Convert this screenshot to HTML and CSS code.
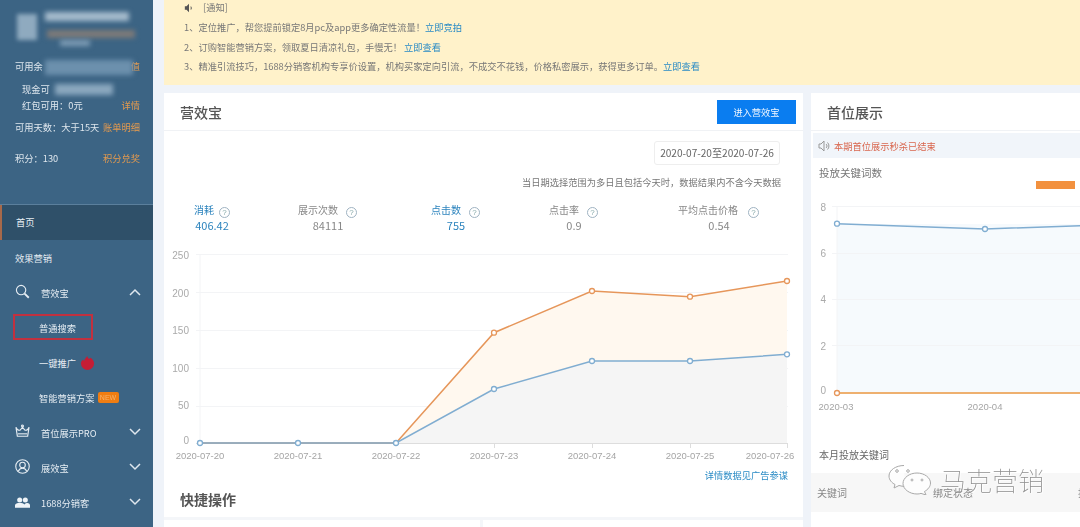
FILE: index.html
```html
<!DOCTYPE html>
<html lang="zh">
<head>
<meta charset="utf-8">
<title>营效宝</title>
<link rel="stylesheet" href="styles.css">
</head>
<body>
<div class="page">
  <aside class="side">
    <div class="account">
      <div class="user"><span class="avatar"></span><span class="smear s1"></span><span class="smear s2"></span><span class="smear s3"></span></div>
      <div class="line l-balance"><span>可用余</span><span class="smear s4"></span><a>值</a></div>
      <div class="line sub l-cash"><span>现金可</span><span class="smear s5"></span></div>
      <div class="line sub l-red"><span>红包可用：0元</span><a>详情</a></div>
      <div class="line l-days"><span>可用天数：大于15天</span><a>账单明细</a></div>
      <div class="line l-score"><span>积分：130</span><a>积分兑奖</a></div>
    </div>
    <nav class="nav">
      <div class="item home">首页</div>
      <div class="item">效果营销</div>
      <div class="item group">
        <svg class="ico" viewBox="0 0 16 16"><circle cx="6.500" cy="6.500" r="5"/><path d="M10.200 10.200l4.500 4.500" stroke-width="2"/></svg>
        <span>营效宝</span>
        <svg class="chev" viewBox="0 0 12 8"><path d="M1 7l5-5 5 5"/></svg>
      </div>
      <div class="item child"><span class="mark">普通搜索</span></div>
      <div class="item child"><span>一键推广</span>
        <svg class="flame" viewBox="0 0 16 15"><path d="M8 0c0 2 1 2.500 2 3 1-.5 1.500-1 1.500-1 2 1.500 3.500 3.500 3.500 6a7 7 0 0 1-14 0c0-2 1-3 2-4 .5.800 1 1 1.500 1C5 3 6.500 1.500 8 0z"/></svg>
      </div>
      <div class="item child"><span>智能营销方案</span><span class="new">NEW</span></div>
      <div class="item group">
        <svg class="ico" viewBox="0 0 16 16"><path d="M1 3.500c1 2.500 3 3.500 4.500 3L8 3.500l2.500 3c1.500.5 3.500-.5 4.500-3l-1.500 9.500h-11z"/><path d="M3 10.500h10"/><circle cx="8" cy="2" r="1"/></svg>
        <span>首位展示PRO</span>
        <svg class="chev" viewBox="0 0 12 8"><path d="M1 1l5 5 5-5"/></svg>
      </div>
      <div class="item group">
        <svg class="ico" viewBox="0 0 16 16"><circle cx="8" cy="8" r="7.200"/><circle cx="8" cy="6.500" r="3"/><path d="M3.500 13c.8-2.200 2.500-3.200 4.500-3.200s3.700 1 4.500 3.200"/></svg>
        <span>展效宝</span>
        <svg class="chev" viewBox="0 0 12 8"><path d="M1 1l5 5 5-5"/></svg>
      </div>
      <div class="item group">
        <svg class="ico solid" viewBox="0 0 16 11"><circle cx="5" cy="2.800" r="2.700"/><circle cx="11" cy="2.800" r="2.700"/><path d="M0 11V8.500C0 6.500 2.500 6 5 6s4 .5 5 1.500c1-1 2-1.500 3-1.500 2 0 3 1 3 2.500V11z"/></svg>
        <span>1688分销客</span>
        <svg class="chev" viewBox="0 0 12 8"><path d="M1 1l5 5 5-5"/></svg>
      </div>
    </nav>
  </aside>

  <main class="main">
    <section class="notice">
      <div class="n-head">
        <svg class="n-ico" viewBox="0 0 12 12"><path d="M1 4h2l3-3v10L3 8H1z"/><path d="M8 3.500a3 3 0 0 1 0 5z"/></svg>
        <span>[通知]</span>
      </div>
      <p>1、定位推广，帮您提前锁定8月pc及app更多确定性流量！<a>立即竞拍</a></p>
      <p>2、订购智能营销方案，领取夏日清凉礼包，手慢无！ <a>立即查看</a></p>
      <p>3、精准引流技巧，1688分销客机构专享价设置，机构买家定向引流，不成交不花钱，价格私密展示，获得更多订单。<a>立即查看</a></p>
    </section>

    <div class="cards">
      <section class="card c-left">
        <header class="c-head">
          <h2>营效宝</h2>
          <button class="enter">进入营效宝</button>
        </header>
        <div class="range-row"><div class="range">2020-07-20至2020-07-26</div></div>
        <div class="range-note">当日期选择范围为多日且包括今天时，数据结果内不含今天数据</div>
        <div class="metrics">
          <div class="metric on m1"><div class="m-l">消耗<i class="q">?</i></div><div class="m-v">406.42</div></div>
          <div class="metric m2"><div class="m-l">展示次数<i class="q">?</i></div><div class="m-v">84111</div></div>
          <div class="metric on m3"><div class="m-l">点击数<i class="q">?</i></div><div class="m-v">755</div></div>
          <div class="metric m4"><div class="m-l">点击率<i class="q">?</i></div><div class="m-v">0.9</div></div>
          <div class="metric m5"><div class="m-l">平均点击价格<i class="q">?</i></div><div class="m-v">0.54</div></div>
        </div>
        <svg class="chart-a" viewBox="164 240 639 228" width="639" height="228">
          <g class="grid">
            <path d="M196 254.500H788M196 292.500H788M196 330.500H788M196 368.500H788M196 406.500H788"/>
            <path d="M200 254V443"/>
          </g>
          <path class="axis" d="M196 443.500H788M494.500 443v5M592.500 443v5M690.500 443v5M787.500 443v5"/>
          <path class="fill-o" d="M396 443L494 332.700 592 291 690 296.700 787 281V443z"/>
          <path class="fill-b" d="M396 443L494 389 592 361 690 361 787 354.300V443z"/>
          <path class="ln-o" d="M200 443H396L494 332.700 592 291 690 296.700 787 281"/>
          <g class="dot-o"><circle cx="494" cy="332.700" r="2.500"/><circle cx="592" cy="291" r="2.500"/><circle cx="690" cy="296.700" r="2.500"/><circle cx="787" cy="281" r="2.500"/></g>
          <path class="ln-b" d="M200 443H396L494 389 592 361 690 361 787 354.300"/>
          <g class="dot-b"><circle cx="200" cy="443" r="2.500"/><circle cx="298" cy="443" r="2.500"/><circle cx="396" cy="443" r="2.500"/><circle cx="494" cy="389" r="2.500"/><circle cx="592" cy="361" r="2.500"/><circle cx="690" cy="361" r="2.500"/><circle cx="787" cy="354.300" r="2.500"/></g>
          <g class="yl">
            <text x="189" y="259">250</text><text x="189" y="297">200</text><text x="189" y="334">150</text><text x="189" y="372">100</text><text x="189" y="409">50</text><text x="189" y="444">0</text>
          </g>
          <g class="xl">
            <text x="200" y="459">2020-07-20</text><text x="298" y="459">2020-07-21</text><text x="396" y="459">2020-07-22</text><text x="494" y="459">2020-07-23</text><text x="592" y="459">2020-07-24</text><text x="690" y="459">2020-07-25</text><text x="770" y="459">2020-07-26</text>
          </g>
        </svg>
        <a class="more">详情数据见广告参谋</a>
        <h2 class="quick">快捷操作</h2>
        <div class="quick-row"><div></div><div></div></div>
      </section>

      <section class="card c-right">
        <header class="c-head"><h2>首位展示</h2></header>
        <div class="flash">
          <svg class="fl-ico" viewBox="0 0 12 12"><path d="M1 4h2l3-3v10L3 8H1z"/><path d="M8 4a2.500 2.500 0 0 1 0 4M9.500 2.500a5 5 0 0 1 0 7"/></svg>
          <span>本期首位展示秒杀已结束</span>
        </div>
        <div class="r-title">投放关键词数</div>
        <svg class="chart-b" viewBox="811 176 269 238" width="269" height="238">
          <rect class="area" x="837" y="225" width="243" height="169"/>
          <path class="legend" d="M1036 182h39v8h-39z"/>
          <g class="grid"><path d="M832 207.500H1080M832 254.500H1080M832 300.500H1080M832 346.500H1080"/><path d="M837 207V394"/></g>
          <path class="ln-b" d="M837 224.700L985 230 1080 226.700"/>
          <circle class="dot-b1" cx="837" cy="224.700" r="2.500"/><circle class="dot-b1" cx="985" cy="230" r="2.500"/>
          <path class="ln-o2" d="M837 394H1080"/>
          <circle class="dot-o1" cx="837" cy="394" r="2.500"/>
          <g class="yl"><text x="826" y="212">8</text><text x="826" y="258">6</text><text x="826" y="304">4</text><text x="826" y="351">2</text><text x="826" y="395">0</text></g>
          <g class="xl"><text x="836" y="411">2020-03</text><text x="985" y="411">2020-04</text></g>
        </svg>
        <div class="r-sub">本月投放关键词</div>
        <div class="r-thead"><span class="t1">关键词</span><span class="t2">绑定状态</span><span class="t3">投放</span></div>
      </section>
    </div>
  </main>
</div>

<div class="wm">
  <svg class="wm-ico" viewBox="0 0 44 30"><path class="b1" d="M16 0.500C8 .5 1 5 1 11c0 4 3 7 6 8.500l-1 3.500 5-2.500c2 .7 4 .9 6 .7"/><path class="b2" d="M29 8c-7.500 0-14 4.800-14 10.500S21.500 29 29 29c1.500 0 3-.2 4-.6l5 1.600-1.500-3.500c3.500-2 6-5 6-8.500C42.500 12.800 36.500 8 29 8z"/><circle cx="9" cy="6" r="1.300"/><circle cx="20" cy="6" r="1.300"/><circle cx="24" cy="15" r="1"/><circle cx="34" cy="15" r="1"/></svg>
  <span class="wm-t">马克营销</span>
</div>
</body>
</html>
```

FILE: styles.css
```css
*, *::before { box-sizing: border-box; }
html, body { margin: 0; padding: 0; width: 1080px; height: 527px; overflow: hidden; }
body { font-family: "Noto Sans CJK SC", "Liberation Sans", sans-serif; font-size: 9.250px; color: #666; background: #eff3f9; }
.page { display: flex; width: 1080px; height: 527px; overflow: hidden; filter: blur(.45px); }
h2, p { margin: 0; }

/* sidebar */
.side { flex: 0 0 153px; background: #3c6484; color: #dfe7ee; }
.account { height: 205px; position: relative; border-bottom: 1px solid #5b7f9c; padding: 0 13px 0 15px; }
.user { height: 58px; position: relative; }
.avatar { position: absolute; left: 2px; top: 14px; width: 20px; height: 26px; background: #8faabf; filter: blur(2px); }
.smear { position: absolute; display: block; filter: blur(2.500px); }
.s1 { left: 30px; top: 12px; width: 84px; height: 9px; background: #a6bccd; }
.s2 { left: 32px; top: 30px; width: 88px; height: 8px; background: #7d7a78; }
.s3 { left: 45px; top: 40px; width: 30px; height: 6px; background: #7f9db5; }
.s4 { left: 30px; top: 1px; width: 88px; height: 15px; background: #6c90ad; }
.s5 { left: 40px; top: 2px; width: 58px; height: 11px; background: #8aa7be; }
.line { display: flex; justify-content: space-between; line-height: 14px; position: relative; white-space: nowrap; }
.line a { color: #e39a4f; }
.sub { padding-left: 7px; }
.l-balance { margin-top: 1px; }
.l-cash { margin-top: 9px; }
.l-red { margin-top: 2px; }
.l-days { margin-top: 8px; }
.l-score { margin-top: 17px; }
.nav { display: flex; flex-direction: column; }
.item { height: 35px; display: flex; align-items: center; padding-left: 15px; color: #e6edf3; }
.home { background: #2f5069; border-left: 2px solid #a8694a; padding: 0 0 1px 14px; }
.group { position: relative; padding-left: 41px; }
.child { padding-left: 39px; }
.ico { position: absolute; left: 15px; top: 9px; width: 15px; height: 15px; fill: none; stroke: #e6edf3; stroke-width: 1.200; }
.ico.solid { fill: #eef3f7; stroke: none; height: 11px; top: 12px; }
.chev { position: absolute; left: 129px; top: 13px; width: 12px; height: 8px; fill: none; stroke: #dfe7ee; stroke-width: 1.500; }
.mark { position: relative; }
.mark::before { content: ""; position: absolute; left: -26px; top: -7px; width: 80px; height: 26px; border: 2px solid #c1313f; }
.flame { width: 15px; height: 14px; margin-left: 4px; fill: #c41d35; }
.new { margin-left: 3px; width: 21px; height: 11px; background: #ef7d12; color: #f6b26b; border-radius: 2px; font-size: 7px; line-height: 11px; text-align: center; font-family: "Liberation Sans", sans-serif; }

/* main */
.main { flex: 1; min-width: 0; padding-left: 11px; overflow: hidden; }
.notice { height: 85px; background: #fff2ca; padding-left: 20px; line-height: 19.500px; color: #777; }
.n-head { display: flex; align-items: center; height: 15px; line-height: 15px; margin-bottom: 3px; }
.n-ico { width: 10px; height: 10px; fill: #555; margin-right: 9px; }
.notice a { color: #2a8bc5; }
.cards { display: flex; gap: 8px; margin-top: 8px; }
.card { background: #fff; height: 434px; }
.c-left { flex: 0 0 639px; }
.c-right { flex: 0 0 290px; overflow: hidden; }
.c-head { height: 38px; display: flex; align-items: center; justify-content: space-between; padding: 0 7px 0 16px; border-bottom: 1px solid #f0f2f5; }
.c-head h2, .quick { font-size: 14px; font-weight: 500; color: #555; }
.enter { width: 79px; height: 24px; margin-top: 1px; border: 0; padding: 0; background: #0a7df0; color: #f2f8ff; font: 9.250px "Noto Sans CJK SC", sans-serif; }
.range-row { display: flex; justify-content: flex-end; padding: 10px 23px 0 0; }
.range { width: 126px; height: 24px; border: 1px solid #eeeeee; border-radius: 3px; text-align: center; line-height: 22px; font-size: 10.100px; color: #666; }
.range-note { text-align: right; padding-right: 22px; margin-top: 10px; line-height: 15px; color: #777; }
.metrics { height: 38px; margin-top: 12px; display: flex; padding-left: 30px; color: #888; }
.metric { text-align: center; flex: none; }
.m-l { font-size: 10px; line-height: 15px; white-space: nowrap; text-align: left; }
.m-v { font-size: 11px; line-height: 15px; }
.on { color: #2b83bd; }
.m1 { width: 36px; margin-right: 68px; }
.m2 { width: 60px; margin-right: 73px; }
.m3 { width: 50px; margin-right: 68px; }
.m4 { width: 50px; margin-right: 79px; }
.m5 { width: 82px; }
.q { display: inline-block; width: 11px; height: 11px; margin-left: 8px; border: 1px solid #9fb3c2; border-radius: 50%; font: 8px/9px "Liberation Sans", sans-serif; text-align: center; color: #8aa; vertical-align: -1px; }
.m1 .q { margin-left: 5px; }
.m5 .q { margin-left: 10px; }
.chart-a, .chart-b { display: block; }
.grid path { stroke: #f3f4f6; fill: none; }
.axis { stroke: #dddddd; fill: none; }
.fill-o { fill: #fff8ef; }
.fill-b { fill: #f5f5f5; }
.ln-o { stroke: #e6965a; stroke-width: 1.500; fill: none; }
.ln-b { stroke: #80add1; stroke-width: 1.500; fill: none; }
.dot-o circle, .dot-o1 { fill: #fff; stroke: #e6965a; stroke-width: 1.300; }
.dot-b circle, .dot-b1 { fill: #fff; stroke: #80add1; stroke-width: 1.300; }
.ln-o2 { stroke: #eeb06f; stroke-width: 1.800; fill: none; }
.yl text { font-size: 10px; fill: #aaa; text-anchor: end; font-family: "Liberation Sans", sans-serif; }
.xl text { font-size: 9.500px; fill: #a5a5a5; text-anchor: middle; font-family: "Liberation Sans", sans-serif; }
.more { display: block; text-align: right; padding-right: 15px; line-height: 14px; color: #2a8bc5; }
.quick { padding-left: 16px; margin-top: 6px; line-height: 22px; font-weight: 700; }
.quick-row { display: flex; gap: 3px; margin-top: 7px; border-top: 3px solid #f4f6f9; height: 12px; }
.quick-row div { flex: 1; }
.quick-row div:first-child { flex: 0 0 319px; border-right: 3px solid #f4f6f9; }
.area { fill: #f6fafd; }
.legend { fill: #f2913f; }
.flash { margin: 2px 0 0 2px; height: 25px; background: #f1f5fa; display: flex; align-items: center; padding-left: 5px; color: #d9674f; }
.fl-ico { width: 12px; height: 12px; fill: none; stroke: #999; margin-right: 4px; }
.r-title { padding-left: 8px; line-height: 16px; margin-top: 7px; font-size: 10.500px; color: #777; }
.chart-b { margin-top: -6px; }
.r-sub { padding-left: 8px; margin-top: 34px; line-height: 16px; color: #666; font-size: 10px; }
.r-thead { height: 39px; margin-top: 10px; background: #f7f7f7; display: flex; align-items: center; color: #888; font-size: 10px; padding-left: 6px; white-space: nowrap; }
.t1 { flex: 0 0 116px; }
.t2 { flex: 0 0 145px; }
.t3 { flex: none; }

/* watermark */
.wm { position: absolute; left: 888px; top: 465px; display: flex; align-items: center; gap: 8px; filter: blur(.4px); }
.wm-ico { width: 44px; height: 30px; fill: none; stroke: #a8a8a8; stroke-width: 1; }
.wm-ico .b1, .wm-ico .b2 { fill: rgba(255,255,255,.75); }
.wm-t { font-size: 26px; line-height: 28px; font-weight: 100; color: #8e8e8e; text-shadow: 0 0 2px #fff, 1px 1px 1px #fff; white-space: nowrap; }
```
